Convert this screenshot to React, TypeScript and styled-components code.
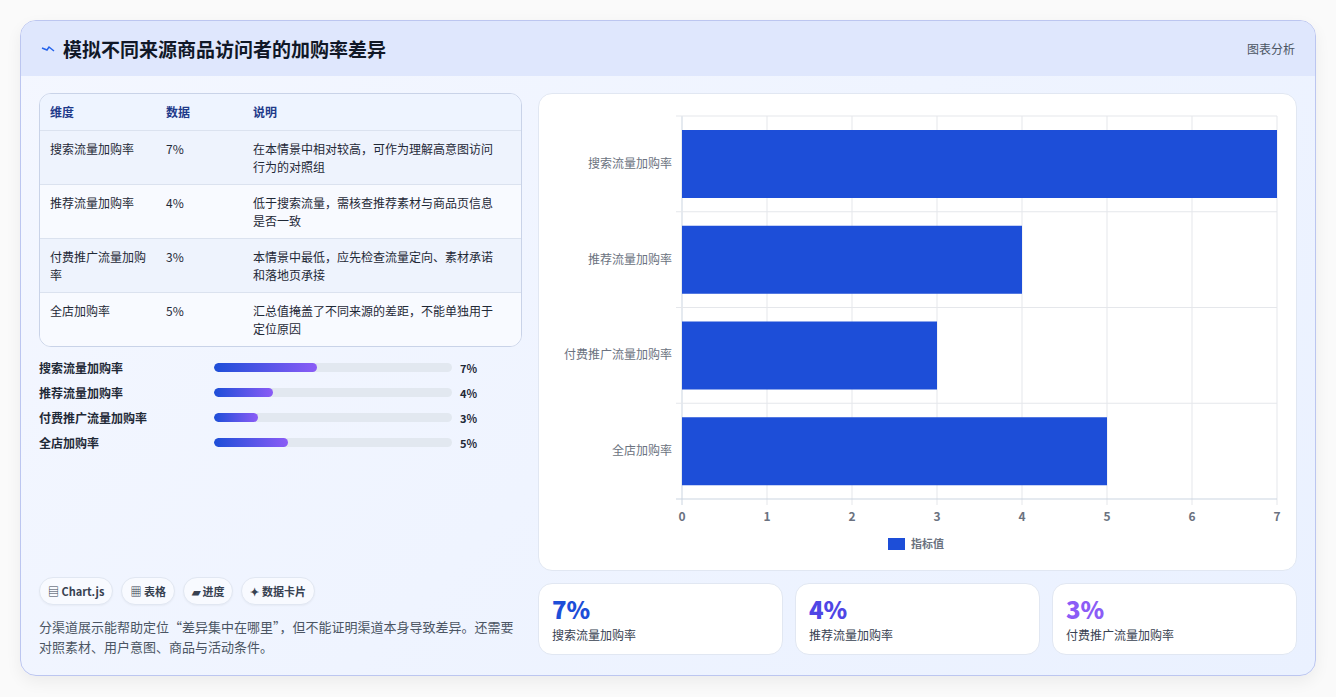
import React from 'react';
import styled, { createGlobalStyle } from 'styled-components';

const GlobalStyle = createGlobalStyle`
  html, body { margin: 0; padding: 0; background: #f3f4f6; }
  body { font-family: "Noto Sans CJK SC", "Noto Sans", sans-serif; color: #1f2937; }
`;

const Page = styled.div`
  width: 1336px;
  height: 697px;
  padding: 20px 20px 0 20px;
  box-sizing: border-box;
  background: #fafafa;
`;

const Card = styled.div`
  width: 1296px;
  height: 656px;
  box-sizing: border-box;
  border: 1px solid #bcc6f0;
  border-radius: 16px;
  background: linear-gradient(135deg, #f4f7ff, #eaf1ff);
  overflow: hidden;
  box-shadow: 0 6px 16px rgba(0, 0, 0, 0.06);
  display: flex;
  flex-direction: column;
`;

const Header = styled.div`
  height: 55px;
  background: #dfe7fd;
  display: flex;
  align-items: center;
  justify-content: space-between;
  padding: 0 20px;
`;

const Title = styled.h1`
  margin: 0;
  font-size: 19px;
  font-weight: 700;
  color: #111827;
  display: flex;
  align-items: center;
  gap: 8px;
`;

const HeaderTag = styled.span`
  font-size: 12px;
  color: #4b5563;
`;

const Body = styled.div`
  flex: 1;
  display: flex;
  gap: 16px;
  padding: 17px 18px 18px 18px;
`;

const Left = styled.div`
  width: 484px;
  display: flex;
  flex-direction: column;
`;

const Right = styled.div`
  flex: 1;
  display: flex;
  flex-direction: column;
  gap: 12px;
`;

const Table = styled.div`
  border: 1px solid #c9d3e8;
  border-radius: 12px;
  overflow: hidden;
  background: #f8faff;
`;

const Row = styled.div<{ $head?: boolean; $alt?: boolean }>`
  display: grid;
  grid-template-columns: 116px 87px 1fr;
  padding: ${p => (p.$head ? '9px 10px' : '9px 10px 8px')};
  min-height: ${p => (p.$head ? '15px' : '35px')};
  border-top: ${p => (p.$head ? 'none' : '1px solid #dbe2ef')};
  background: ${p => (p.$head ? '#eef4ff' : p.$alt ? '#eef3fd' : '#f8faff')};
  font-size: 12px;
  line-height: 18px;
  color: ${p => (p.$head ? '#1e3a8a' : '#1f2937')};
  font-weight: ${p => (p.$head ? 600 : 400)};
`;

const Cell = styled.div`
  padding-right: 10px;
`;

const Bars = styled.div`
  margin-top: 11px;
  display: flex;
  flex-direction: column;
  gap: 6px;
`;

const BarRow = styled.div`
  display: grid;
  grid-template-columns: 175px 238px 1fr;
  align-items: center;
  gap: 0;
  height: 19px;
  font-size: 12px;
  font-weight: 600;
  color: #1f2937;
`;

const Track = styled.div`
  height: 9px;
  border-radius: 5px;
  background: #e2e8f0;
  overflow: hidden;
`;

const Fill = styled.div`
  height: 100%;
  border-radius: 5px;
  background: linear-gradient(90deg, #1d4ed8, #8b5cf6);
`;

const BarValue = styled.span`
  padding-left: 8px;
  font-size: 11px;
`;

const Spacer = styled.div`
  flex: 1;
`;

const Chips = styled.div`
  display: flex;
  gap: 8px;
`;

const Chip = styled.span`
  font-size: 11px;
  font-weight: 600;
  color: #374151;
  background: #f8faff;
  border: 1px solid #e1e7f2;
  border-radius: 14px;
  padding: 5px 8px;
  box-shadow: 0 1px 2px rgba(0,0,0,0.04);
`;

const Note = styled.p`
  margin: 12px 0 0 0;
  font-size: 13px;
  line-height: 20px;
  color: #4b5563;
`;

const ChartCard = styled.div`
  height: 478px;
  box-sizing: border-box;
  background: #fff;
  border: 1px solid #e1e7f2;
  border-radius: 14px;
`;

const Stats = styled.div`
  display: flex;
  gap: 12px;
`;

const Stat = styled.div`
  flex: 1;
  height: 72px;
  box-sizing: border-box;
  background: #fff;
  border: 1px solid #e1e7f2;
  border-radius: 14px;
  padding: 10px 13px;
`;

const StatValue = styled.div<{ $color: string }>`
  font-size: 24px;
  font-weight: 800;
  line-height: 30px;
  color: ${p => p.$color};
`;

const StatLabel = styled.div`
  font-size: 12px;
  color: #374151;
  margin-top: 2px;
`;

const rows = [
  ['搜索流量加购率', '7%', '在本情景中相对较高，可作为理解高意图访问行为的对照组'],
  ['推荐流量加购率', '4%', '低于搜索流量，需核查推荐素材与商品页信息是否一致'],
  ['付费推广流量加购率', '3%', '本情景中最低，应先检查流量定向、素材承诺和落地页承接'],
  ['全店加购率', '5%', '汇总值掩盖了不同来源的差距，不能单独用于定位原因'],
];

const data = [
  { name: '搜索流量加购率', v: 7 },
  { name: '推荐流量加购率', v: 4 },
  { name: '付费推广流量加购率', v: 3 },
  { name: '全店加购率', v: 5 },
];

const Chart: React.FC = () => {
  // plot area relative to card (card origin 539,93)
  const x0 = 143, y0 = 22, w = 595, h = 383;
  const unit = w / 7;
  const band = h / 4;
  const font = '"Noto Sans CJK SC", sans-serif';
  return (
    <svg width="757" height="478">
      {Array.from({ length: 8 }).map((_, i) => (
        <line key={i} x1={x0 + i * unit} x2={x0 + i * unit} y1={y0} y2={y0 + h + 6}
          stroke={i === 0 ? '#cbd5e1' : '#e5e7eb'} />
      ))}
      {Array.from({ length: 5 }).map((_, i) => (
        <line key={i} x1={x0 - 6} x2={x0 + w} y1={y0 + i * band} y2={y0 + i * band}
          stroke={i === 4 ? '#cbd5e1' : '#e5e7eb'} />
      ))}
      {data.map((d, i) => (
        <g key={d.name}>
          <rect x={x0} y={y0 + i * band + 14} width={d.v * unit} height={68} fill="#1d4ed8" />
          <text x={x0 - 10} y={y0 + i * band + band / 2 + 4} textAnchor="end" fontSize="12"
            fill="#6b7280" fontFamily={font}>{d.name}</text>
        </g>
      ))}
      {Array.from({ length: 8 }).map((_, i) => (
        <text key={i} x={x0 + i * unit} y={427} textAnchor="middle" fontSize="12" fontWeight="600"
          fill="#6b7280" fontFamily={font}>{i}</text>
      ))}
      <rect x={349} y={444} width={17} height={12} fill="#1d4ed8" />
      <text x={372} y={454} fontSize="11" fontWeight="600" fill="#6b7280" fontFamily={font}>指标值</text>
    </svg>
  );
};

const App: React.FC = () => (
  <Page>
    <GlobalStyle />
    <Card>
      <Header>
        <Title>
          <svg width="14" height="10" viewBox="0 0 14 10">
            <path d="M1 4 L6 6 L8 3 L13 7" stroke="#2563eb" strokeWidth="1.5" fill="none" />
          </svg>
          模拟不同来源商品访问者的加购率差异
        </Title>
        <HeaderTag>图表分析</HeaderTag>
      </Header>
      <Body>
        <Left>
          <Table>
            <Row $head>
              <Cell>维度</Cell><Cell>数据</Cell><Cell>说明</Cell>
            </Row>
            {rows.map((r, i) => (
              <Row key={r[0]} $alt={i % 2 === 0}>
                <Cell>{r[0]}</Cell><Cell>{r[1]}</Cell><Cell>{r[2]}</Cell>
              </Row>
            ))}
          </Table>
          <Bars>
            {data.map(d => (
              <BarRow key={d.name}>
                <span>{d.name}</span>
                <Track><Fill style={{ width: `${d.v * 6.2}%` }} /></Track>
                <BarValue>{d.v}%</BarValue>
              </BarRow>
            ))}
          </Bars>
          <Spacer />
          <Chips>
            <Chip>▤ Chart.js</Chip>
            <Chip>▦ 表格</Chip>
            <Chip>▰ 进度</Chip>
            <Chip>✦ 数据卡片</Chip>
          </Chips>
          <Note>分渠道展示能帮助定位“差异集中在哪里”，但不能证明渠道本身导致差异。还需要对照素材、用户意图、商品与活动条件。</Note>
        </Left>
        <Right>
          <ChartCard><Chart /></ChartCard>
          <Stats>
            <Stat><StatValue $color="#1d4ed8">7%</StatValue><StatLabel>搜索流量加购率</StatLabel></Stat>
            <Stat><StatValue $color="#4f46e5">4%</StatValue><StatLabel>推荐流量加购率</StatLabel></Stat>
            <Stat><StatValue $color="#8b5cf6">3%</StatValue><StatLabel>付费推广流量加购率</StatLabel></Stat>
          </Stats>
        </Right>
      </Body>
    </Card>
  </Page>
);

export default App;
